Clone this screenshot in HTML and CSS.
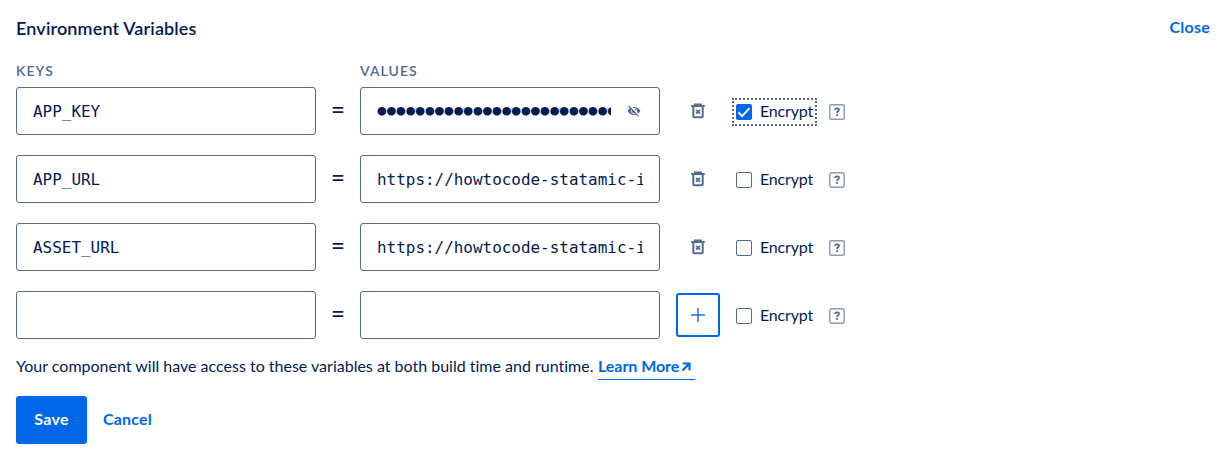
FILE: index.html
```html
<!DOCTYPE html>
<html lang="en">
<head>
<meta charset="utf-8">
<title>Environment Variables</title>
<link rel="stylesheet" href="styles.css">
</head>
<body>
<svg class="sprite" aria-hidden="true">
  <symbol id="trash" viewBox="0 0 16 16">
    <path d="M1.200 3.100h13.600M5 2.500V1.500h6v1" fill="none" stroke="currentColor" stroke-width="2"/>
    <path d="M3.300 4v9.200c0 .7.400 1 1 1h7.400c.6 0 1-.3 1-1V4" fill="none" stroke="currentColor" stroke-width="2"/>
    <path d="M6.100 6.800l3.800 3.800M9.900 6.800l-3.800 3.800" fill="none" stroke="currentColor" stroke-width="1.800"/>
  </symbol>
  <symbol id="help" viewBox="0 0 16 16">
    <rect x=".75" y=".75" width="14.5" height="14.5" rx="1.8" fill="none" stroke="#8c9ab3" stroke-width="1.4"/>
    <path d="M6 5.900c.1-1.200.9-1.600 2-1.600s2 .5 2 1.500c0 1.500-1.900 1.400-1.900 3.100" fill="none" stroke="currentColor" stroke-width="1.700"/>
    <rect x="7.100" y="10.100" width="1.900" height="1.800" fill="currentColor"/>
  </symbol>
</svg>
<main class="panel">
  <header class="head"><h1 class="title">Environment Variables</h1><a class="link close">Close</a></header>
  <div class="labels"><span class="label">KEYS</span><span class="label values">VALUES</span></div>
  <div class="rows">
    <div class="row">
      <input class="field" value="APP_KEY"><span class="equals">=</span>
      <div class="field secret"><input class="dots" value="●●●●●●●●●●●●●●●●●●●●●●●●●●●●">
        <svg class="eye" viewBox="0 0 14 12"><path d="M.6 6C2 3.300 4.200 1.900 7 1.900S12 3.300 13.400 6C12 8.700 9.800 10.100 7 10.100S2 8.700.6 6z" fill="#526a8e"/><circle cx="7" cy="6" r="2.700" fill="none" stroke="#fff" stroke-width=".8"/><path d="M2.500.2l10 10.600" stroke="#fff" stroke-width="1.300"/><path d="M1.500.8l10 10.600" stroke="#526a8e" stroke-width="1.200"/></svg>
      </div>
      <div class="action"><svg class="icon"><use href="#trash"/></svg></div>
      <label class="encrypt focused"><span class="box checked"><svg class="tick" viewBox="0 0 16 16"><path d="M2.500 8.400l3.600 3.700 7.400-8" fill="none" stroke="#fff" stroke-width="2"/></svg></span><span class="caption">Encrypt</span></label>
      <svg class="icon help"><use href="#help"/></svg>
    </div>
    <div class="row">
      <input class="field" value="APP_URL"><span class="equals">=</span><input class="field" value="https://howtocode-statamic-i">
      <div class="action"><svg class="icon"><use href="#trash"/></svg></div>
      <label class="encrypt"><span class="box"></span><span class="caption">Encrypt</span></label><svg class="icon help"><use href="#help"/></svg>
    </div>
    <div class="row">
      <input class="field" value="ASSET_URL"><span class="equals">=</span><input class="field" value="https://howtocode-statamic-i">
      <div class="action"><svg class="icon"><use href="#trash"/></svg></div>
      <label class="encrypt"><span class="box"></span><span class="caption">Encrypt</span></label><svg class="icon help"><use href="#help"/></svg>
    </div>
    <div class="row">
      <input class="field"><span class="equals">=</span><input class="field">
      <div class="action add"><svg class="plus" viewBox="0 0 14 14"><path d="M7 0v14M0 7h14" stroke="#1a73e8" stroke-width="1.500"/></svg></div>
      <label class="encrypt"><span class="box"></span><span class="caption">Encrypt</span></label><svg class="icon help"><use href="#help"/></svg>
    </div>
  </div>
  <p class="note"><span class="hint">Your component will have access to these variables at both build time and runtime.</span><a class="link learn"><span class="caption">Learn More</span><svg class="arrow" viewBox="0 0 10 10"><path d="M1.700 1.500H8.500V8.300M8.200 1.800L1.500 8.500" fill="none" stroke="currentColor" stroke-width="2.200"/></svg></a></p>
  <footer class="foot"><button class="save">Save</button><a class="link cancel">Cancel</a></footer>
</main>
</body>
</html>
```
FILE: styles.css
```css
* { box-sizing: border-box; }
body { margin: 0; background: #fff; color: #031b4e; font: 16px/24px Lato, sans-serif; font-variant-ligatures: none; }
.sprite { display: none; }
.panel { height: 454px; padding: 15px 16px; overflow: hidden; white-space: nowrap; }
.head { display: flex; justify-content: space-between; height: 46px; }
.title { margin: 0; font-size: 18px; line-height: 27px; font-weight: 600; letter-spacing: .14px; }
.link { color: #0067e6; font-weight: 700; text-decoration: none; }
.close { margin-right: 3px; letter-spacing: .25px; }
.labels { display: flex; height: 26px; }
.label { width: 344px; font-size: 14px; line-height: 19px; font-weight: 600; letter-spacing: 1.050px; color: #526a8e; }
.rows { display: flex; flex-direction: column; gap: 20px; }
.row { display: flex; align-items: center; height: 48px; }
.field { width: 300px; height: 48px; padding: 0 16px; border: 1px solid #526a8e; border-radius: 3px; background: #fff; color: #031b4e; font: 15.950px/46px "DejaVu Sans Mono", monospace; outline: 0; }
.secret { display: flex; align-items: center; }
.dots { width: 234px; height: 44px; margin-bottom: 3px; padding: 0; border: 0; outline: 0; background: none; color: #031b4e; font: 14.500px/44px "DejaVu Sans Mono", monospace; letter-spacing: .87px; text-indent: .4px; }
.eye { width: 14px; height: 12px; margin-left: 16px; }
.equals { width: 44px; padding-bottom: 5px; text-align: center; font-size: 24px; font-weight: 500; }
.action { display: grid; place-items: center; width: 44px; height: 44px; margin-left: 16px; color: #526a8e; }
.add { border: 2px solid #0067e6; border-radius: 3px; }
.plus { width: 14px; height: 14px; }
.icon { width: 16px; height: 16px; }
.encrypt { display: flex; align-items: center; gap: 8px; width: 85px; height: 28px; margin: 2px 0 0 12px; padding-left: 4px; letter-spacing: -.17px; }
.caption { padding-bottom: 2px; }
.focused { outline: 2px dotted #526a8e; outline-offset: -2px; }
.box { display: block; width: 16px; height: 16px; border: 1px solid #526a8e; border-radius: 2px; flex: none; }
.checked { border: 0; background: #0067e6; }
.tick { display: block; width: 16px; height: 16px; }
.help { margin: 2px 0 0 12px; color: #526a8e; }
.note { display: flex; margin: 15px 0 0; height: 26px; }
.hint { width: 582px; }
.learn { display: flex; align-items: center; width: 97px; height: 26px; border-bottom: 1px solid #0067e6; letter-spacing: -.05px; }
.arrow { width: 10px; height: 10px; margin-left: 2px; }
.foot { display: flex; align-items: center; gap: 16px; margin-top: 16px; height: 48px; }
.cancel { padding-bottom: 2px; letter-spacing: .2px; }
.save { width: 71px; height: 48px; border: 0; border-radius: 3px; padding: 0 0 2px; background: #0067e6; color: #fff; font: 700 16px/24px Lato, sans-serif; letter-spacing: .3px; }
```
